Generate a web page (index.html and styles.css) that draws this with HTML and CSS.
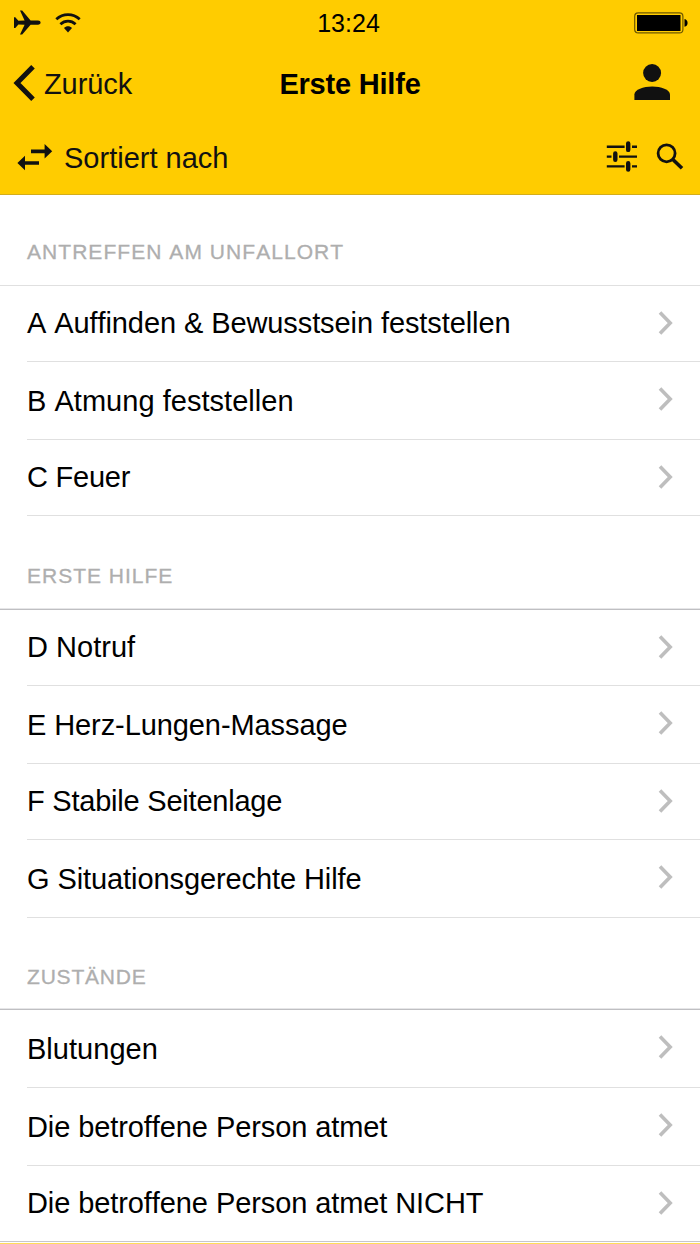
FILE: index.html
```html
<!DOCTYPE html>
<html lang="de">
<head>
    <meta charset="UTF-8">
    <meta name="viewport" content="width=device-width, initial-scale=1.0">
    <title>Erste Hilfe</title>
    <link rel="stylesheet" href="styles.css">
</head>
<body>
    <svg class="sprite" width="0" height="0">
        <symbol id="chevron" viewBox="0 0 16 24">
            <path d="M2 1.5 L12.2 12 L2 22.5" fill="none" stroke="#bebebe" stroke-width="3.6"/>
        </symbol>
    </svg>
    <header class="header">
        <div class="status">
            <div class="signals">
                <svg width="28" height="26" viewBox="0 0 28 26">
                    <path d="M1 7.2 H2.3 L5.4 10.8 L11.6 10.4 L7 0.6 H9.2 L17.6 10.4 H25 C26.5 10.4 27.6 11.3 27.6 12.6 C27.6 13.9 26.5 14.8 25 14.8 H17.6 L9.2 24.6 H7 L11.6 14.8 L5.4 14.4 L2.3 18 H1 Z"/>
                </svg>
                <svg width="26" height="20" viewBox="0 0 26 20">
                    <path d="M1.3 6.3 C8 0.1 18 0.1 24.7 6.3 M5.4 11.2 C9.9 7.2 16.1 7.2 20.6 11.2" fill="none" stroke="#111" stroke-width="2.8"/>
                    <path d="M9 15 C11.2 12.6 14.8 12.6 17 15 L13 19.4 Z"/>
                </svg>
            </div>
            <span class="time">13:24</span>
            <svg class="battery" width="54" height="22" viewBox="0 0 54 22">
                <rect x="0.7" y="0.9" width="48.2" height="20" rx="3.5" fill="none" stroke="#6e5800" stroke-width="1.2"/>
                <rect x="3" y="3" width="43.5" height="16"/>
                <path d="M50.5 7 C54.6 7.8 54.6 14 50.5 14.8 Z"/>
            </svg>
        </div>
        <div class="navbar">
            <div class="back">
                <svg width="22" height="36" viewBox="0 0 22 36">
                    <path d="M20 1.8 L4 18 L20 34.2" fill="none" stroke="#111" stroke-width="5"/>
                </svg>
                <span class="back-text">Zurück</span>
            </div>
            <h1>Erste Hilfe</h1>
            <svg class="user" width="36" height="36" viewBox="0 0 36 36">
                <circle cx="18.1" cy="9" r="9"/>
                <path d="M0.4 36 V30.5 C0.4 25.5 9.4 22.5 18.2 22.5 C27 22.5 36 25.5 36 30.5 V36 Z"/>
            </svg>
        </div>
        <div class="toolbar">
            <svg width="36" height="28" viewBox="0 0 36 28">
                <path d="M14 6.6 H27.6 V1 L35.2 8.2 L27.6 15.4 V10.2 H14 Z M22 18.2 H8 V12.8 L0.4 20 L8 27.2 V21.8 H22 Z"/>
            </svg>
            <span class="sort-text">Sortiert nach</span>
            <svg class="filter" width="32" height="32" viewBox="0 0 32 32">
                <path d="M0.8 5.8 H18.6 M26 5.8 H31 M0.8 15.6 H5.5 M13 15.6 H31 M0.8 25.4 H18.6 M26 25.4 H31" stroke="#111" stroke-width="2.4"/>
                <path d="M22.2 2.5 V8.9 M9.3 12.4 V18.8 M22.2 22.2 V28.6" stroke="#111" stroke-width="4.4" stroke-linecap="round"/>
            </svg>
            <svg class="search" width="28" height="28" viewBox="0 0 28 28">
                <circle cx="10.6" cy="10.3" r="8.5" fill="none" stroke="#111" stroke-width="2.8"/>
                <path d="M16.6 16.3 L26 25.3" stroke="#111" stroke-width="3.6"/>
            </svg>
        </div>
    </header>

    <main>
        <h2 class="title first">Antreffen am Unfallort</h2>
        <ul class="list">
            <li class="row"><span class="label">A Auffinden &amp; Bewusstsein feststellen</span><svg class="arrow"><use href="#chevron"/></svg></li>
            <li class="row tall"><span class="label wide">B Atmung feststellen</span><svg class="arrow"><use href="#chevron"/></svg></li>
            <li class="row"><span class="label tight">C Feuer</span><svg class="arrow"><use href="#chevron"/></svg></li>
        </ul>
        <h2 class="title dark">Erste Hilfe</h2>
        <ul class="list">
            <li class="row"><span class="label wide">D Notruf</span><svg class="arrow"><use href="#chevron"/></svg></li>
            <li class="row tall"><span class="label">E Herz-Lungen-Massage</span><svg class="arrow"><use href="#chevron"/></svg></li>
            <li class="row"><span class="label tight">F Stabile Seitenlage</span><svg class="arrow"><use href="#chevron"/></svg></li>
            <li class="row tall"><span class="label">G Situationsgerechte Hilfe</span><svg class="arrow"><use href="#chevron"/></svg></li>
        </ul>
        <h2 class="title dark short">Zustände</h2>
        <ul class="list last">
            <li class="row tall"><span class="label wide">Blutungen</span><svg class="arrow"><use href="#chevron"/></svg></li>
            <li class="row tall"><span class="label">Die betroffene Person atmet</span><svg class="arrow"><use href="#chevron"/></svg></li>
            <li class="row"><span class="label">Die betroffene Person atmet NICHT</span><svg class="arrow"><use href="#chevron"/></svg></li>
        </ul>
    </main>
    <div class="bottom"></div>
</body>
</html>
```
FILE: styles.css
```css
* {
    margin: 0;
    padding: 0;
    box-sizing: border-box;
}

body {
    width: 700px;
    height: 1244px;
    overflow: hidden;
    background-color: #fff;
    color: #000;
    font-family: "Liberation Sans", Arial, sans-serif;
    font-kerning: none;
}

svg {
    display: block;
    flex-shrink: 0;
    fill: #111;
}

.sprite {
    position: absolute;
}

/* yellow header */
.header {
    height: 195px;
    background-color: #ffcc00;
    border-bottom: 1px solid #d3ad1c;
}

.status {
    display: grid;
    grid-template-columns: 1fr auto 1fr;
    align-items: center;
    height: 46px;
    padding: 0 12px 0 13px;
}

.signals {
    display: flex;
    align-items: center;
    gap: 14px;
    padding-bottom: 1px;
}

.time {
    font-size: 25px;
    margin-right: 4px;
}

.battery {
    justify-self: end;
    fill: #000;
}

.navbar {
    display: grid;
    grid-template-columns: 1fr auto 1fr;
    align-items: center;
    height: 74px;
    padding: 0 13px;
}

.back {
    display: flex;
    align-items: center;
    gap: 9px;
}

.back-text,
.sort-text {
    font-size: 29px;
    letter-spacing: -0.1px;
    color: #111;
}

.back-text {
    padding-top: 2px;
}

h1 {
    font-size: 29px;
    letter-spacing: -0.2px;
    padding-top: 2px;
}

.user {
    justify-self: end;
    margin-right: 17px;
    margin-bottom: 2px;
}

.toolbar {
    display: flex;
    align-items: center;
    height: 74px;
    padding: 0 16px 0 17px;
}

.sort-text {
    margin-left: 11px;
    padding-top: 2px;
    letter-spacing: 0;
}

.filter {
    margin-left: auto;
    margin-right: 18px;
}

/* sections */
.title {
    height: 94px;
    padding: 47px 27px 0;
    border-bottom: 1px solid #bfbfc2;
    font-size: 21px;
    line-height: 26px;
    font-weight: normal;
    letter-spacing: 1px;
    text-transform: uppercase;
    color: #aeaeae;
    -webkit-text-stroke: 0.3px #aeaeae;
}

.title.first {
    height: 91px;
    padding-top: 44px;
    border-color: #e0e0e0;
    letter-spacing: 1.05px;
}

.title.short {
    height: 92px;
    padding-top: 46px;
    letter-spacing: 0.8px;
}

.title.dark {
    box-shadow: inset 0 -1px #e6e6e8;
}

.list {
    list-style: none;
}

.row {
    display: flex;
    align-items: center;
    justify-content: space-between;
    height: 76px;
    margin-left: 27px;
    padding: 0 26px 2px 0;
    border-bottom: 1px solid #e0e0e0;
}

.row.tall {
    height: 78px;
    padding-bottom: 4px;
}

.label {
    font-size: 29px;
    line-height: 34px;
    letter-spacing: -0.09px;
    white-space: nowrap;
}

.label.tight {
    letter-spacing: -0.22px;
}

.label.wide {
    letter-spacing: 0.03px;
}

.row.tall .label {
    padding-top: 5px;
}

.arrow {
    width: 16px;
    height: 24px;
}

.last .row:last-child {
    height: 75px;
    border-bottom: 0;
}

.bottom {
    height: 3px;
    border-top: 1px solid #c8c6cc;
    border-bottom: 1px solid #ffdc5a;
}
```
